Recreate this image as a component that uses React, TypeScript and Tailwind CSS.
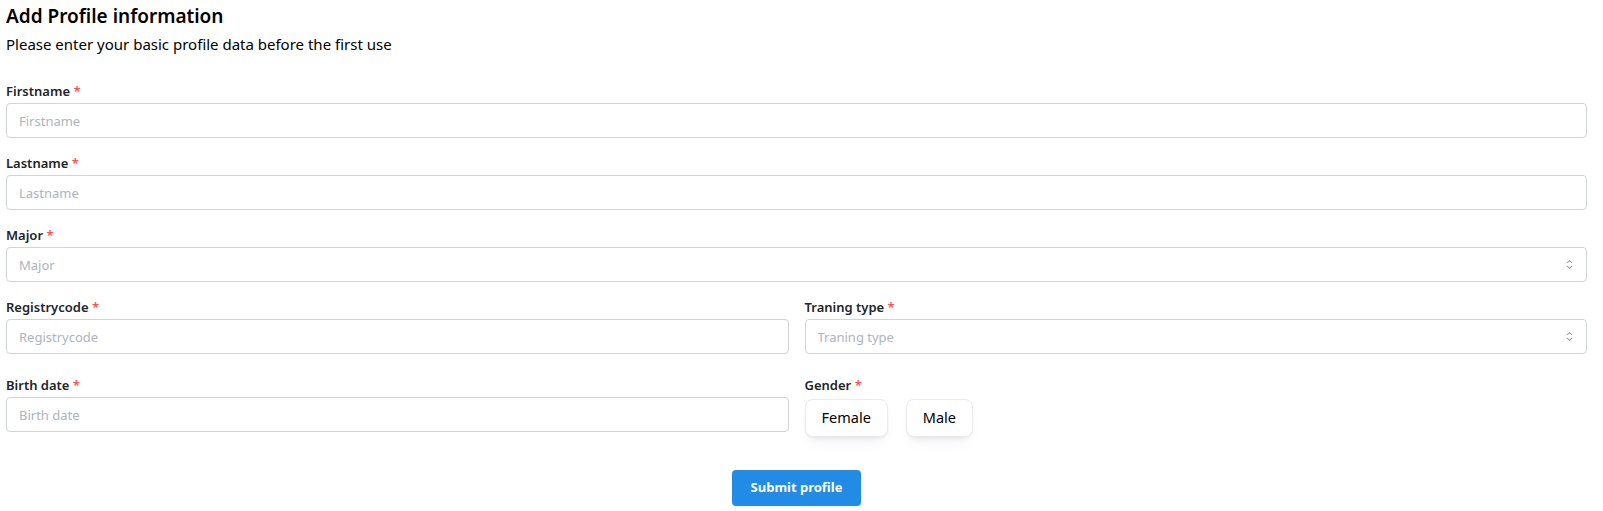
import React from 'react';

const font = { fontFamily: '"Noto Sans", "Open Sans", sans-serif' };

function Label({ text }: { text: string }) {
  return (
    <label className="block text-[13px] leading-[20px] font-semibold text-[#212529]">
      {text} <span className="text-[#fa5252]">*</span>
    </label>
  );
}

function TextField({ label }: { label: string }) {
  return (
    <div className="flex flex-col">
      <Label text={label} />
      <input
        type="text"
        placeholder={label}
        className="mt-[2px] h-[35px] w-full rounded-[4px] border border-[#ced4da] bg-white px-3 text-[13px] text-[#212529] placeholder:text-[#adb5bd] outline-none"
      />
    </div>
  );
}

function SelectField({ label }: { label: string }) {
  return (
    <div className="flex flex-col">
      <Label text={label} />
      <div className="relative mt-[2px]">
        <input
          type="text"
          readOnly
          placeholder={label}
          className="h-[35px] w-full rounded-[4px] border border-[#ced4da] bg-white pl-3 pr-9 text-[13px] placeholder:text-[#adb5bd] outline-none"
        />
        <div className="pointer-events-none absolute inset-y-0 right-0 flex w-[36px] items-center justify-center">
          <svg width="15" height="15" viewBox="0 0 15 15" fill="none">
            <path
              d="M4.93179 5.43179C4.75605 5.60753 4.75605 5.89245 4.93179 6.06819C5.10753 6.24392 5.39245 6.24392 5.56819 6.06819L7.49999 4.13638L9.43179 6.06819C9.60753 6.24392 9.89245 6.24392 10.0682 6.06819C10.2439 5.89245 10.2439 5.60753 10.0682 5.43179L7.81819 3.18179C7.73379 3.0974 7.61933 3.04999 7.49999 3.04999C7.38064 3.04999 7.26618 3.0974 7.18179 3.18179L4.93179 5.43179ZM10.0682 9.56819C10.2439 9.39245 10.2439 9.10753 10.0682 8.93179C9.89245 8.75606 9.60753 8.75606 9.43179 8.93179L7.49999 10.8636L5.56819 8.93179C5.39245 8.75606 5.10753 8.75606 4.93179 8.93179C4.75605 9.10753 4.75605 9.39245 4.93179 9.56819L7.18179 11.8182C7.26618 11.9026 7.38064 11.95 7.49999 11.95C7.61933 11.95 7.73379 11.9026 7.81819 11.8182L10.0682 9.56819Z"
              fill="#868e96"
            />
          </svg>
        </div>
      </div>
    </div>
  );
}

function GenderButton({ text }: { text: string }) {
  return (
    <button
      type="button"
      className="h-[38px] rounded-[8px] border border-[#e9ecef] bg-white px-[16px] text-[14.5px] text-black shadow-[0_1px_3px_rgba(0,0,0,0.05),0_10px_15px_-5px_rgba(0,0,0,0.05),0_7px_7px_-5px_rgba(0,0,0,0.04)]"
    >
      {text}
    </button>
  );
}

export default function App() {
  return (
    <div className="min-h-[511px] bg-white pl-[6px] pr-[16px]" style={font}>
      {/* Header */}
      <h1 className="pt-[3px] text-[19px] leading-[26px] font-semibold text-black">Add Profile information</h1>
      <p className="mt-[5px] text-[15px] leading-[20px] text-black">
        Please enter your basic profile data before the first use
      </p>

      {/* Form */}
      <form className="mt-[27px] flex flex-col">
        <TextField label="Firstname" />
        <div className="mt-[15px]">
          <TextField label="Lastname" />
        </div>
        <div className="mt-[15px]">
          <SelectField label="Major" />
        </div>
        <div className="mt-[15px] grid grid-cols-2 gap-x-4">
          <TextField label="Registrycode" />
          <SelectField label="Traning type" />
        </div>
        <div className="mt-[21px] grid grid-cols-2 gap-x-4">
          <TextField label="Birth date" />
          <div className="flex flex-col">
            <Label text="Gender" />
            <div className="mt-[4px] flex gap-[18px]">
              <GenderButton text="Female" />
              <GenderButton text="Male" />
            </div>
          </div>
        </div>
        <div className="mt-[33px] flex justify-center">
          <button
            type="button"
            className="h-[36px] w-[129px] rounded-[4px] bg-[#228be6] text-[13px] font-bold text-white"
          >
            Submit profile
          </button>
        </div>
      </form>
    </div>
  );
}
